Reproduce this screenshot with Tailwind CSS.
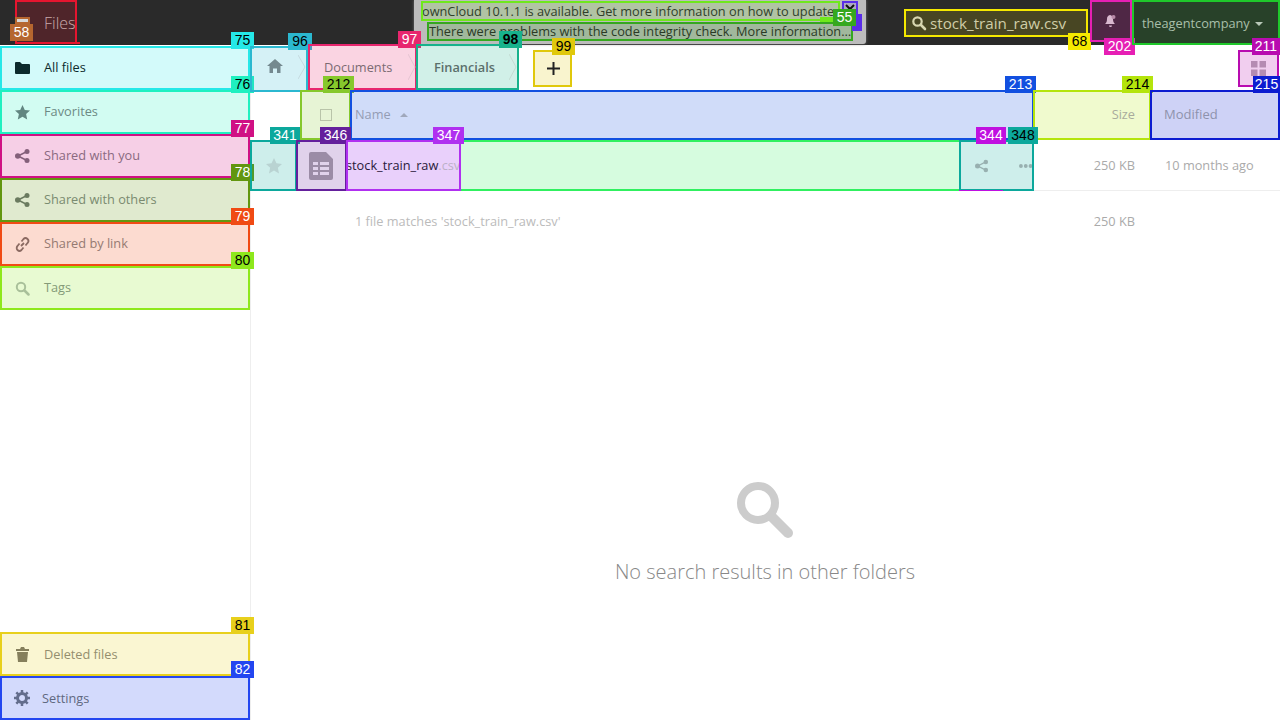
<!DOCTYPE html>
<html lang="en">
<head>
<meta charset="utf-8">
<title>Files</title>
<script src="https://cdn.jsdelivr.net/npm/@tailwindcss/browser@4"></script>
</head>
<body class="w-[1280px] h-[720px] overflow-hidden bg-white font-['Open_Sans',sans-serif] text-[12.75px] text-[#555]">
<header class="relative h-[45px] bg-[#2a2a2a] flex items-stretch">
  <div class="relative ml-[15px] w-[62px] h-[44px] border-2 border-[#e6152f] bg-[#e6152f]/20 flex items-center">
    <span class="absolute left-[-2px] top-[15px] w-[15px] h-[8px] bg-[#b5662f]"></span>
    <span class="absolute left-[0px] top-[17px] w-[11px] h-[3px] bg-[#d8d8d8]"></span>
    <span class="absolute left-[27px] top-[10px] text-[16px] font-light text-[#c9a9ab] leading-[22px]">Files</span>
    <span class="absolute left-[-7px] top-[22px] w-[23px] h-[17px] bg-[#b5662f] text-white text-[14px] leading-[17px] text-center font-['Liberation_Sans',sans-serif]">58</span>
    <span class="absolute left-[40px] top-[40px] w-[23px] h-[2px] bg-[#e6152f]"></span>
  </div>
  <div class="relative ml-[337px] w-[452px] h-[44px] bg-[#bcbcbc] shadow-[0_0_3px_#777] rounded-b-[3px]">
    <div class="absolute left-[7px] top-[1px] w-[419px] h-[20px] border-2 border-[#6fe81c] bg-[#6fe81c]/15 text-[12.75px] leading-[16px] text-[#2f3f2a] whitespace-nowrap overflow-hidden"><span class="-ml-px">ownCloud 10.1.1 is available. Get more information on how to update.</span></div>
    <div class="absolute left-[13px] top-[22px] w-[426px] h-[19px] border-2 border-[#35a81f] bg-[#35a81f]/20 text-[12.75px] leading-[15px] text-[#2a3a26] whitespace-nowrap overflow-hidden">There were problems with the code integrity check. More information…</div>
    <div class="absolute left-[428px] top-[1px] w-[16px] h-[13px] border-2 border-[#5a2de8] bg-[#5a2de8]/15 flex items-center justify-center">
      <svg class="w-[10px] h-[7px]" viewBox="0 0 10 7"><path fill="none" stroke="#111" stroke-width="2" d="M1 1l4 4 4-4"/></svg>
    </div>
    <span class="absolute left-[406px] top-[17px] w-[20px] h-[5px] bg-[#6fe81c]"></span>
    <span class="absolute left-[438px] top-[14px] w-[10px] h-[17px] bg-[#5a2de8]"></span>
    <span class="absolute left-[419px] top-[9px] w-[23px] h-[17px] bg-[#35a81f] text-white text-[14px] leading-[17px] text-center font-['Liberation_Sans',sans-serif]">55</span>
  </div>
  <div class="relative ml-[38px] mt-[9px] w-[184px] h-[28px] border-2 border-[#f5e900] bg-[#f5e900]/15 flex items-center pl-[5px] gap-[3px]">
    <svg class="w-[16px] h-[16px] shrink-0" viewBox="0 0 16 16"><circle cx="6.5" cy="6.5" r="4.2" fill="none" stroke="#d8d6b0" stroke-width="2.2"/><path stroke="#d8d6b0" stroke-width="2.6" stroke-linecap="round" d="M10 10l4 4"/></svg>
    <span class="text-[15.2px] leading-[20px] text-[#cfcda8] whitespace-nowrap">stock_train_raw.csv</span>
    <span class="absolute left-[162px] top-[22px] w-[23px] h-[17px] bg-[#f5e900] text-black text-[14px] leading-[17px] text-center font-['Liberation_Sans',sans-serif]">68</span>
  </div>
  <div class="relative ml-[2px] w-[42px] h-[42px] border-2 border-[#e61fb4] bg-[#e61fb4]/20 flex items-center justify-center">
    <svg class="w-[14px] h-[14px]" viewBox="0 0 14 14"><path fill="#d9b8cf" d="M6 1a4 4 0 0 0-3 4c0 3-1 4-2 5h10c-1-1-2-2-2-5a4 4 0 0 0-3-4zM5 11.500h3a1.500 1.500 0 0 1-3 0z"/><circle cx="9.500" cy="3" r="2" fill="#b88aa8"/></svg>
    <span class="absolute left-[12px] top-[36px] w-[31px] h-[17px] bg-[#e61fb4] text-white text-[14px] leading-[17px] text-center font-['Liberation_Sans',sans-serif]">202</span>
  </div>
  <div class="relative w-[148px] h-[45px] border-2 border-[#1fc82b] bg-[#1fc82b]/15 flex items-center pl-[8px] gap-[5px]">
    <span class="pt-[2px] text-[12.75px] text-[#a9bfa9] whitespace-nowrap">theagentcompany</span>
    <svg class="w-[8px] h-[4px] mt-[2px]" viewBox="0 0 8 4"><path fill="#b8c8b8" d="M0 0h8L4 4z"/></svg>
  </div>
</header>

<div class="flex h-[675px]">
  <nav class="relative w-[251px] shrink-0 border-r border-[#eee] flex flex-col pt-[1px]">
    <a class="relative h-[44px] w-[250px] border-2 border-[#25e8e8] bg-[#25e8e8]/20 flex items-center pl-[13px] gap-[14px] text-[#0d2a2c]">
      <svg class="w-[15px] h-[12px] shrink-0" viewBox="0 0 15 12"><path fill="#0b2a2c" d="M0 1a1 1 0 0 1 1-1h4l2 2h7a1 1 0 0 1 1 1v8a1 1 0 0 1-1 1H1a1 1 0 0 1-1-1z"/></svg>All files
      <span class="absolute right-[-6px] top-[-16px] w-[23px] h-[17px] bg-[#25e8e8] text-black text-[14px] leading-[17px] text-center font-['Liberation_Sans',sans-serif]">75</span>
    </a>
    <a class="relative h-[44px] w-[250px] border-2 border-[#1ff0c0] bg-[#1ff0c0]/20 flex items-center pl-[13px] gap-[14px] text-[#6d8a84]">
      <svg class="w-[15px] h-[15px] shrink-0" viewBox="0 0 15 15"><path fill="#628681" d="M7.500 0l2.300 5 5.200.6-3.900 3.500 1.100 5.400-4.700-2.700-4.700 2.700 1.100-5.400L0 5.600 5.200 5z"/></svg>Favorites
      <span class="absolute right-[-6px] top-[-16px] w-[23px] h-[17px] bg-[#1ff0c0] text-black text-[14px] leading-[17px] text-center font-['Liberation_Sans',sans-serif]">76</span>
    </a>
    <a class="relative h-[44px] w-[250px] border-2 border-[#d01084] bg-[#d01084]/20 flex items-center pl-[13px] gap-[14px] text-[#8a6a80]">
      <svg class="w-[15px] h-[14px] shrink-0" viewBox="0 0 15 14"><g fill="#84607a"><circle cx="2.800" cy="7" r="2.800"/><circle cx="12" cy="2.500" r="2.500"/><circle cx="12" cy="11.500" r="2.500"/></g><path stroke="#84607a" stroke-width="1.500" d="M3 7l9-4.500M3 7l9 4.500"/></svg>Shared with you
      <span class="absolute right-[-6px] top-[-16px] w-[23px] h-[17px] bg-[#d01084] text-white text-[14px] leading-[17px] text-center font-['Liberation_Sans',sans-serif]">77</span>
    </a>
    <a class="relative h-[44px] w-[250px] border-2 border-[#62960f] bg-[#62960f]/20 flex items-center pl-[13px] gap-[14px] text-[#7a8a70]">
      <svg class="w-[15px] h-[14px] shrink-0" viewBox="0 0 15 14"><g fill="#6b7b60"><circle cx="2.800" cy="7" r="2.800"/><circle cx="12" cy="2.500" r="2.500"/><circle cx="12" cy="11.500" r="2.500"/></g><path stroke="#6b7b60" stroke-width="1.500" d="M3 7l9-4.500M3 7l9 4.500"/></svg>Shared with others
      <span class="absolute right-[-6px] top-[-16px] w-[23px] h-[17px] bg-[#62960f] text-white text-[14px] leading-[17px] text-center font-['Liberation_Sans',sans-serif]">78</span>
    </a>
    <a class="relative h-[44px] w-[250px] border-2 border-[#f04a14] bg-[#f04a14]/20 flex items-center pl-[13px] gap-[14px] text-[#957a72]">
      <svg class="w-[15px] h-[15px] shrink-0" viewBox="0 0 15 15"><path fill="none" stroke="#8b6a62" stroke-width="1.800" d="M6 9l3-3M6.500 4.500l2-2.500a2.500 2.500 0 0 1 4 4l-2 2.500M8.500 10.500l-2 2.500a2.500 2.500 0 0 1-4-4l2-2.500"/></svg>Shared by link
      <span class="absolute right-[-6px] top-[-16px] w-[23px] h-[17px] bg-[#f04a14] text-white text-[14px] leading-[17px] text-center font-['Liberation_Sans',sans-serif]">79</span>
    </a>
    <a class="relative h-[44px] w-[250px] border-2 border-[#8ee81c] bg-[#8ee81c]/20 flex items-center pl-[13px] gap-[14px] text-[#849a78]">
      <svg class="w-[15px] h-[15px] shrink-0" viewBox="0 0 15 15"><circle cx="6" cy="6" r="4.200" fill="none" stroke="#a9c09a" stroke-width="2"/><path stroke="#a9c09a" stroke-width="2.500" stroke-linecap="round" d="M9.500 9.500l4 4"/></svg>Tags
      <span class="absolute right-[-6px] top-[-16px] w-[23px] h-[17px] bg-[#8ee81c] text-black text-[14px] leading-[17px] text-center font-['Liberation_Sans',sans-serif]">80</span>
    </a>
    <a class="relative mt-auto h-[44px] w-[250px] border-2 border-[#e8d01c] bg-[#e8d01c]/20 flex items-center pl-[14px] gap-[15px] text-[#948e6e]">
      <svg class="w-[13px] h-[15px] shrink-0" viewBox="0 0 13 15"><path fill="#857f5c" d="M0 2h4l1-2h3l1 2h4v2H0zM1 5h11l-1 10H2z"/></svg><span class="pt-[1px]">Deleted files</span>
      <span class="absolute right-[-6px] top-[-17px] w-[23px] h-[17px] bg-[#e8d01c] text-black text-[14px] leading-[17px] text-center font-['Liberation_Sans',sans-serif]">81</span>
    </a>
    <a class="relative h-[44px] w-[250px] border-2 border-[#2346f0] bg-[#2346f0]/20 flex items-center pl-[12px] gap-[12px] text-[#5f6880]">
      <svg class="w-[16px] h-[16px] shrink-0" viewBox="0 0 16 16"><circle cx="8" cy="8" r="4.500" fill="none" stroke="#636d8c" stroke-width="3"/><path stroke="#636d8c" stroke-width="2.500" d="M8 0v3M8 13v3M0 8h3M13 8h3M2.300 2.300l2 2M11.700 11.700l2 2M13.700 2.300l-2 2M4.300 11.700l-2 2"/></svg><span class="pt-[1px]">Settings</span>
      <span class="absolute right-[-6px] top-[-17px] w-[23px] h-[17px] bg-[#2346f0] text-white text-[14px] leading-[17px] text-center font-['Liberation_Sans',sans-serif]">82</span>
    </a>
  </nav>

  <main class="relative flex-1 min-w-0 flex flex-col">
    <div class="relative h-[45px] flex items-start">
      <div class="relative mt-[1px] -ml-px w-[58px] h-[46px] border-2 border-[#2bb8d0] bg-[#2bb8d0]/20 flex items-center pl-[15px]">
        <svg class="w-[16px] h-[14px] mb-[6px]" viewBox="0 0 16 14"><path fill="#74898f" d="M8 0l8 7h-2.500v7h-3.500V9.500H6V14H2.500V7H0z"/></svg>
        <svg class="absolute right-[0px] top-[7px] w-[8px] h-[24px]" viewBox="0 0 8 24"><path fill="none" stroke="#c5dbe0" d="M0 0l7 12L0 24"/></svg>
        <span class="absolute left-[36px] top-[-15px] w-[24px] h-[17px] bg-[#2bb8d0] text-black text-[14px] leading-[17px] text-center font-['Liberation_Sans',sans-serif]">96</span>
      </div>
      <div class="relative -mt-[1px] w-[109px] h-[46px] border-2 border-[#e8266e] bg-[#e8266e]/20 flex items-center pl-[14px] pt-[2px] text-[#7a6b72]">Documents
        <svg class="absolute right-[-1px] top-[8px] w-[8px] h-[26px]" viewBox="0 0 8 26"><path fill="none" stroke="#e5c5d2" d="M0 0l7 13L0 26"/></svg>
        <span class="absolute right-[-6px] top-[-15px] w-[23px] h-[17px] bg-[#e8266e] text-white text-[14px] leading-[17px] text-center font-['Liberation_Sans',sans-serif]">97</span>
      </div>
      <div class="relative -mt-[1px] -ml-px w-[103px] h-[46px] border-2 border-[#17b28c] bg-[#17b28c]/20 flex items-center pl-[16px] pt-[2px] font-semibold text-[#5b6f6b]">Financials
        <svg class="absolute right-[0px] top-[8px] w-[8px] h-[26px]" viewBox="0 0 8 26"><path fill="none" stroke="#c5dbd3" d="M0 0l7 13L0 26"/></svg>
        <span class="absolute right-[-5px] top-[-15px] w-[23px] h-[17px] bg-[#17b28c] text-black text-[14px] leading-[17px] text-center font-['Liberation_Sans',sans-serif]">98</span>
      </div>
      <div class="relative ml-[14px] mt-[5px] w-[39px] h-[37px] border-2 border-[#e0c80c] bg-[#e0c80c]/20 flex items-center justify-center pl-[1px]">
        <svg class="w-[13px] h-[13px]" viewBox="0 0 13 13"><path stroke="#222" stroke-width="2" d="M6.500 0v13M0 6.500h13"/></svg>
        <span class="absolute left-[17px] top-[-14px] w-[23px] h-[17px] bg-[#e0c80c] text-black text-[14px] leading-[17px] text-center font-['Liberation_Sans',sans-serif]">99</span>
      </div>
      <div class="relative ml-auto mr-[1px] mt-[5px] w-[41px] h-[37px] border-2 border-[#b80cb0] bg-[#b80cb0]/20 flex items-center justify-center">
        <svg class="w-[15px] h-[15px]" viewBox="0 0 15 15"><path fill="#b58bb2" d="M0 0h6.500v6.500H0zM8.500 0H15v6.500H8.500zM0 8.500h6.500V15H0zM8.500 8.500H15V15H8.500z"/></svg>
        <span class="absolute right-[-3px] top-[-14px] w-[28px] h-[17px] bg-[#b80cb0] text-white text-[14px] leading-[17px] text-center font-['Liberation_Sans',sans-serif]">211</span>
      </div>
    </div>

    <div class="relative h-[50px] flex">
      <div class="relative ml-[49px] w-[51px] h-[50px] border-2 border-[#86c82c] bg-[#86c82c]/20 flex items-center justify-center">
        <span class="w-[12px] h-[12px] border border-[#b9c4a9]"></span>
        <span class="absolute left-[21px] top-[-16px] w-[31px] h-[17px] bg-[#86c82c] text-black text-[14px] leading-[17px] text-center font-['Liberation_Sans',sans-serif]">212</span>
      </div>
      <div class="relative -ml-px w-[684px] h-[50px] border-2 border-[#1250e0] bg-[#1250e0]/20 flex items-center pl-[3px] gap-[9px] text-[#949cb4]">Name
        <svg class="w-[8px] h-[4px]" viewBox="0 0 8 4"><path fill="#a0a8bc" d="M0 4h8L4 0z"/></svg>
        <span class="absolute right-[-4px] top-[-16px] w-[31px] h-[17px] bg-[#1250e0] text-white text-[14px] leading-[17px] text-center font-['Liberation_Sans',sans-serif]">213</span>
      </div>
      <div class="relative -ml-px w-[118px] h-[50px] border-2 border-[#b4e40c] bg-[#b4e40c]/20 flex items-center justify-end pr-[14px] text-[#a8ab9c]">Size
        <span class="absolute right-[-4px] top-[-16px] w-[31px] h-[17px] bg-[#b4e40c] text-black text-[14px] leading-[17px] text-center font-['Liberation_Sans',sans-serif]">214</span>
      </div>
      <div class="relative -ml-px w-[130px] h-[50px] border-2 border-[#0c1cd0] bg-[#0c1cd0]/20 flex items-center pl-[12px] text-[13px] text-[#8f92ac]">Modified
        <span class="absolute right-[-2px] top-[-16px] w-[27px] h-[17px] bg-[#0c1cd0] text-white text-[14px] leading-[17px] text-center font-['Liberation_Sans',sans-serif]">215</span>
      </div>
    </div>

    <div class="relative h-[51px] flex border-b border-[#eee]">
      <div class="relative -ml-px w-[47px] h-[51px] border-2 border-[#0ca89c] bg-[#0ca89c]/20 flex items-center justify-center">
        <svg class="w-[16px] h-[16px]" viewBox="0 0 15 15"><path fill="#b9d3d2" d="M7.500 0l2.300 5 5.200.6-3.900 3.500 1.100 5.400-4.700-2.700-4.700 2.700 1.100-5.400L0 5.600 5.200 5z"/></svg>
        <span class="absolute left-[18px] top-[-15px] w-[30px] h-[17px] bg-[#0ca89c] text-white text-[14px] leading-[17px] text-center font-['Liberation_Sans',sans-serif]">341</span>
      </div>
      <div class="relative -ml-px w-[51px] h-[51px] border-2 border-[#64209c] bg-[#64209c]/20 flex items-center justify-center pr-[2px]">
        <svg class="w-[24px] h-[28px]" viewBox="0 0 24 28"><path fill="#9b8ca6" fill-rule="evenodd" d="M2 0h15l7 7v19a2 2 0 0 1-2 2H2a2 2 0 0 1-2-2V2a2 2 0 0 1 2-2zM4 10v3h5v-3zm7 0v3h9v-3zM4 15v3h5v-3zm7 0v3h9v-3zM4 20v3h5v-3zm7 0v3h9v-3z"/></svg>
        <span class="absolute left-[22px] top-[-15px] w-[31px] h-[17px] bg-[#64209c] text-white text-[14px] leading-[17px] text-center font-['Liberation_Sans',sans-serif]">346</span>
      </div>
      <div class="relative -ml-px w-[615px] h-[51px] border-2 border-[#30f060] bg-[#30f060]/20">
        <div class="absolute -left-[2px] -top-[2px] w-[115px] h-[51px] border-2 border-[#b030f0] bg-[#e9d0fb] flex items-center text-[#2a1a3a] whitespace-nowrap overflow-hidden"><span class="-ml-[2px] pt-[1px]">stock_train_raw<span class="text-[#bcb0c8]">.csv</span></span></div>
        <span class="absolute left-[85px] top-[-15px] w-[31px] h-[17px] bg-[#b030f0] text-white text-[14px] leading-[17px] text-center font-['Liberation_Sans',sans-serif]">347</span>
      </div>
      <div class="relative -ml-[2px] w-[75px] h-[51px] border-2 border-[#0ca89c] bg-[#0ca89c]/20 flex items-center pl-[14px] gap-[30px]">
        <svg class="w-[14px] h-[14px]" viewBox="0 0 15 14"><g fill="#98b0b0"><circle cx="2.800" cy="7" r="2.800"/><circle cx="12" cy="2.500" r="2.500"/><circle cx="12" cy="11.500" r="2.500"/></g><path stroke="#98b0b0" stroke-width="1.500" d="M3 7l9-4.500M3 7l9 4.500"/></svg>
        <svg class="w-[14px] h-[4px]" viewBox="0 0 14 4"><g fill="#98b0b0"><circle cx="2" cy="2" r="2"/><circle cx="7" cy="2" r="2"/><circle cx="12" cy="2" r="2"/></g></svg>
        <span class="absolute left-[15px] top-[-15px] w-[30px] h-[17px] bg-[#c010e0] text-white text-[14px] leading-[17px] text-center font-['Liberation_Sans',sans-serif]">344</span>
        <span class="absolute left-[47px] top-[-15px] w-[30px] h-[17px] bg-[#0ca89c] text-black text-[14px] leading-[17px] text-center font-['Liberation_Sans',sans-serif]">348</span>
        <span class="absolute left-[-2px] bottom-[-2px] w-[44px] h-[1px] bg-[#c010e0]"></span>
      </div>
      <div class="w-[101px] flex items-center justify-end pt-[2px] text-[#aaa]">250 KB</div>
      <div class="pl-[30px] flex items-center pt-[2px] text-[#aaa] whitespace-nowrap">10 months ago</div>
    </div>

    <div class="flex h-[60px] items-center pt-[2px] text-[#bbb]">
      <span class="ml-[104px]">1 file matches 'stock_train_raw.csv'</span>
      <span class="ml-auto mr-[145px] text-[#aaa]">250 KB</span>
    </div>

    <div class="mt-[230px] flex flex-col items-center w-[1028px]">
      <svg class="w-[58px] h-[58px]" viewBox="0 0 58 58"><circle cx="22" cy="22" r="17" fill="none" stroke="#ccc" stroke-width="8"/><path stroke="#ccc" stroke-width="10" stroke-linecap="round" d="M35 35l17 17"/></svg>
      <p class="mt-[18px] text-[20px] font-light text-[#888] leading-[30px]">No search results in other folders</p>
    </div>
  </main>
</div>
</body>
</html>
